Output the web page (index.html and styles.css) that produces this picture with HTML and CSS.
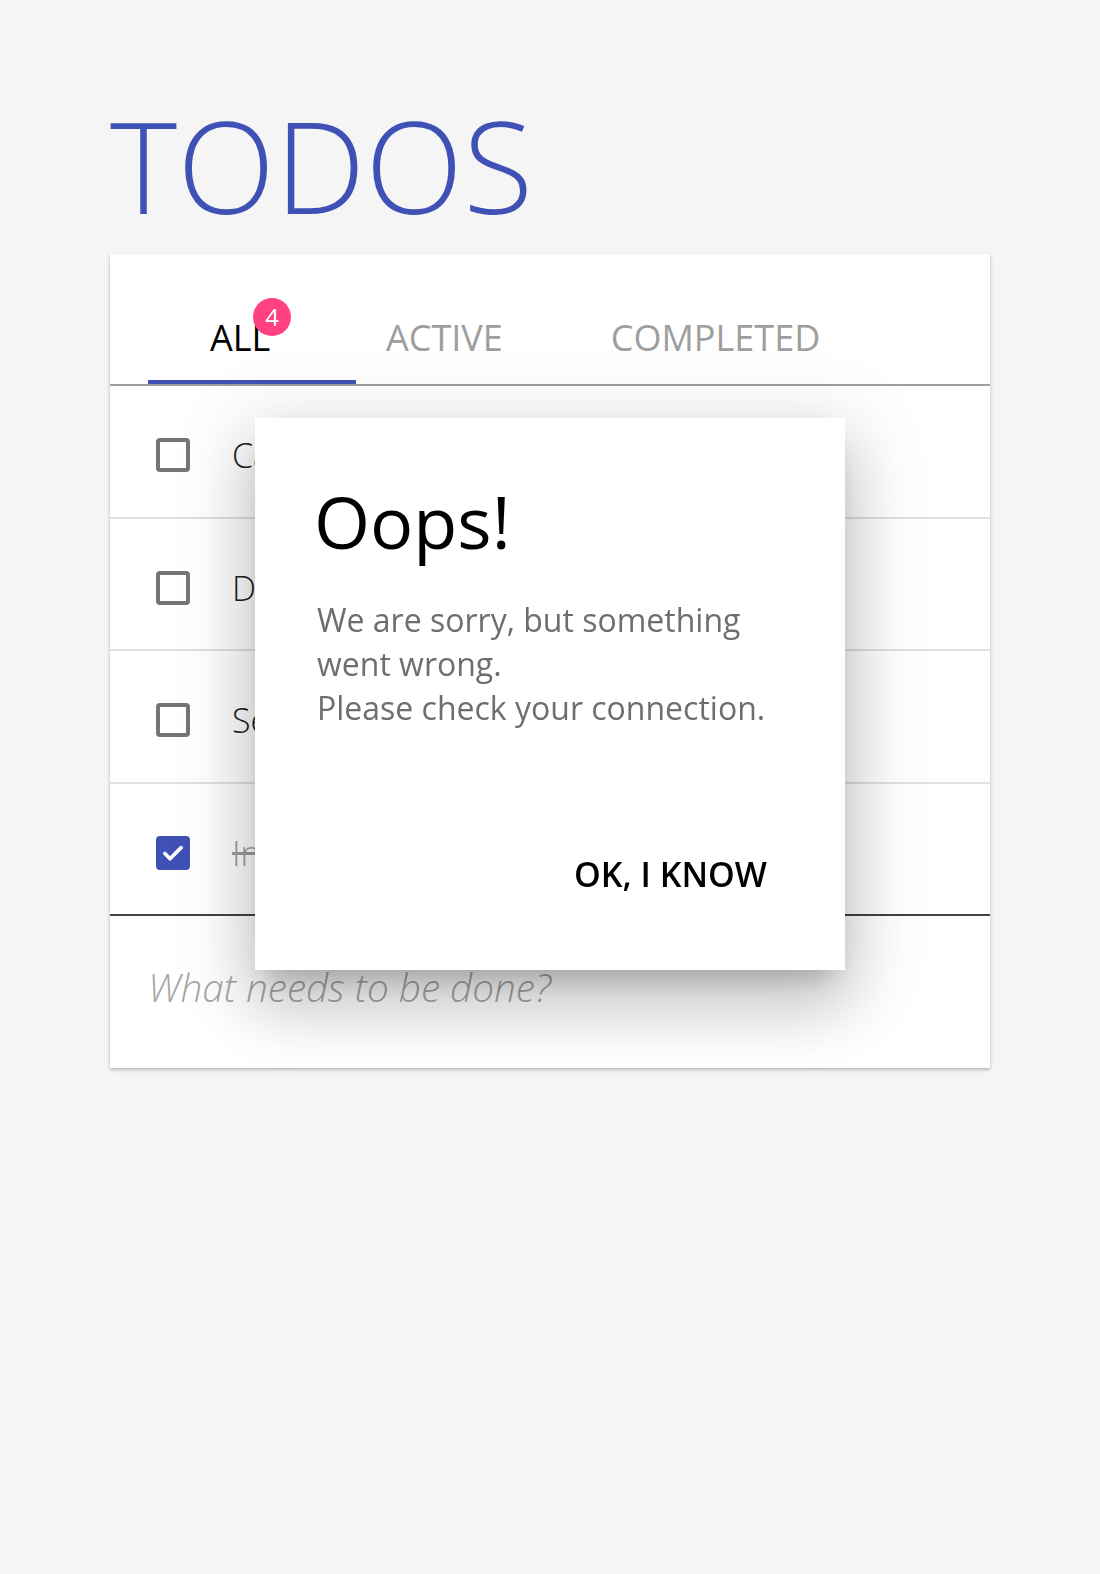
FILE: index.html
```html
<!DOCTYPE html>
<html lang="en">
<head>
<meta charset="utf-8">
<title>Todos</title>
<link rel="stylesheet" href="styles.css">
</head>
<body>
<main class="app">
  <h1 class="title">TODOS</h1>
  <section class="card">
    <nav class="tabs">
      <div class="tab tab-all is-active"><span class="tab-label">ALL<span class="badge">4</span></span></div>
      <div class="tab tab-active"><span class="tab-label">ACTIVE</span></div>
      <div class="tab tab-completed"><span class="tab-label">COMPLETED</span></div>
    </nav>
    <ul class="list">
      <li class="row"><span class="box"></span><span class="row-text">Call mom about the weekend</span></li>
      <li class="row"><span class="box"></span><span class="row-text">Do the grocery shopping</span></li>
      <li class="row"><span class="box"></span><span class="row-text">Send the report to Anna</span></li>
      <li class="row row-last"><span class="box box-checked"><svg viewBox="0 0 24 24" width="30" height="30"><path d="M4.5 12.5l4.8 4.8L19.5 7" fill="none" stroke="#fff" stroke-width="3.4" stroke-linecap="round" stroke-linejoin="round"/></svg></span><span class="row-text row-done">Install the new update</span></li>
    </ul>
    <div class="new-todo"><span class="placeholder">What needs to be done?</span></div>
  </section>
</main>
<div class="overlay">
  <div class="dialog">
    <h2 class="dialog-title">Oops!</h2>
    <p class="dialog-text">We are sorry, but something went wrong.<br>Please check your connection.</p>
    <div class="dialog-actions"><span class="dialog-btn">OK, I KNOW</span></div>
  </div>
</div>
</body>
</html>
```
FILE: styles.css
```css
html, body {
  margin: 0;
  padding: 0;
}
body {
  background: #f5f5f5;
  font-family: "Open Sans", "Noto Sans", sans-serif;
  color: #212121;
  height: 1574px;
}
.app {
  width: 880px;
  margin: 0 auto;
  padding-top: 100px;
}
.title {
  margin: 0 0 24px 0;
  font-size: 128px;
  line-height: 130px;
  font-weight: 300;
  color: #3f51b5;
}
.card {
  background: #fff;
  box-shadow: 0 2px 4px rgba(0,0,0,0.18), 0 1px 2px rgba(0,0,0,0.12);
}
.tabs {
  display: flex;
  padding-left: 38px;
  border-bottom: 2px solid #9e9e9e;
}
.tab {
  box-sizing: border-box;
  padding-top: 66px;
  padding-bottom: 24px;
  border-bottom: 4px solid transparent;
  font-size: 36px;
  line-height: 36px;
  font-weight: 400;
  color: #9e9e9e;
}
.tab.is-active {
  border-bottom-color: #3f51b5;
  color: #000;
}
.tab-all {
  width: 208px;
  padding-left: 62px;
}
.tab-active {
  padding-left: 30px;
}
.tab-completed {
  margin-left: 108px;
}
.tab-label {
  position: relative;
  display: inline-block;
}
.badge {
  position: absolute;
  left: 43px;
  top: -22px;
  width: 38px;
  height: 38px;
  border-radius: 50%;
  background: #ff4081;
  color: #fff;
  font-size: 24px;
  line-height: 38px;
  font-weight: 400;
  text-align: center;
}
.list {
  list-style: none;
  margin: 0;
  padding: 0;
}
.row {
  box-sizing: content-box;
  display: flex;
  align-items: center;
  height: 122.5px;
  padding-top: 8px;
  padding-left: 46px;
  border-bottom: 2px solid #e0e0e0;
  white-space: nowrap;
  overflow: hidden;
}
.row-last {
  border-bottom-color: #424242;
}
.box {
  box-sizing: border-box;
  flex: none;
  width: 34px;
  height: 34px;
  border: 4px solid #757575;
  border-radius: 4px;
  margin-right: 42px;
  display: flex;
  align-items: center;
  justify-content: center;
}
.box-checked {
  background: #3f51b5;
  border-color: #3f51b5;
}
.row-text {
  font-size: 34px;
  line-height: 34px;
  font-weight: 300;
  color: #212121;
}
.row-done {
  color: #9e9e9e;
  text-decoration: line-through;
}
.new-todo {
  height: 152px;
  box-sizing: border-box;
  padding-left: 38px;
  padding-top: 52px;
}
.placeholder {
  font-size: 38.7px;
  line-height: 39px;
  font-style: italic;
  font-weight: 300;
  color: #a6a6a6;
}
.overlay {
  position: fixed;
  inset: 0;
  display: flex;
  justify-content: center;
  align-items: flex-start;
  padding-top: 418px;
}
.dialog {
  box-sizing: border-box;
  width: 590px;
  height: 552px;
  background: #fff;
  padding: 60px 62px 0 62px;
  box-shadow: 0 18px 24px -11px rgba(0,0,0,0.2), 0 38px 60px 5px rgba(0,0,0,0.14), 0 14px 74px 13px rgba(0,0,0,0.12);
}
.dialog-title {
  margin: 0 0 0 -3px;
  font-size: 72px;
  line-height: 86px;
  font-weight: 400;
  color: #000;
}
.dialog-text {
  margin: 34px 0 0 0;
  font-size: 32px;
  line-height: 44px;
  color: #6e6e6e;
}
.dialog-actions {
  display: flex;
  justify-content: flex-end;
  margin-top: 112px;
  margin-right: 16px;
}
.dialog-btn {
  padding: 16px 0;
  font-size: 34px;
  line-height: 33px;
  font-weight: 600;
  color: #000;
}
```
